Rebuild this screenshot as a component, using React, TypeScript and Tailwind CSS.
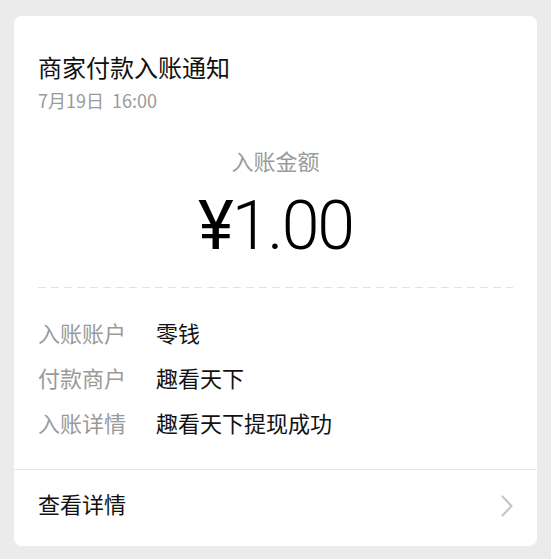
const rows = [
  { label: '入账账户', value: '零钱' },
  { label: '付款商户', value: '趣看天下' },
  { label: '入账详情', value: '趣看天下提现成功' },
];

export default function App() {
  return (
    <div
      className="min-h-[559px] w-full bg-[#ebebeb] pt-4 pb-[13px] px-[14px]"
      style={{ fontFamily: '"Noto Sans CJK SC", "Noto Sans", sans-serif' }}
    >
      <div className="bg-white rounded-[8px] overflow-hidden">
        {/* header */}
        <div className="px-6 pt-[36px]">
          <div className="text-[24px] leading-[30px] text-[#111]">商家付款入账通知</div>
          <div className="mt-[6px] text-[18px] leading-[24px] text-[#9a9a9a]">7月19日&nbsp;&nbsp;16:00</div>
        </div>

        {/* amount */}
        <div className="mt-[34px] flex flex-col items-center">
          <div className="text-[22px] leading-[28px] text-[#9a9a9a]">入账金额</div>
          <div
            className="mt-[12px] text-[68px] leading-[80px] font-light text-black tracking-[-2px]"
            style={{ fontFamily: 'Roboto, "Noto Sans", sans-serif' }}
          >
            <span className="font-normal">¥</span>1.00
          </div>
        </div>

        <div className="mx-6 mt-[21px] h-px bg-[repeating-linear-gradient(90deg,#e2e2e2_0_8px,transparent_8px_13px)]" />

        {/* details */}
        <div className="px-6 pt-[30px] pb-[33px] flex flex-col gap-[17px]">
          {rows.map((r) => (
            <div key={r.label} className="flex text-[22px] leading-[28px]">
              <span className="w-[118px] text-[#9a9a9a]">{r.label}</span>
              <span className="text-[#111]">{r.value}</span>
            </div>
          ))}
        </div>

        {/* footer */}
        <div className="border-t border-[#e6e6e6] h-[77px] px-6 pb-[10px] flex items-center justify-between">
          <span className="text-[22px] text-[#111]">查看详情</span>
          <svg width="12" height="22" viewBox="0 0 12 22" fill="none" className="mt-[5px]">
            <polyline points="1.5,1.5 10.5,11 1.5,20.5" stroke="#c7c7c7" strokeWidth="2.2" strokeLinecap="round" strokeLinejoin="round" />
          </svg>
        </div>
      </div>
    </div>
  );
}
